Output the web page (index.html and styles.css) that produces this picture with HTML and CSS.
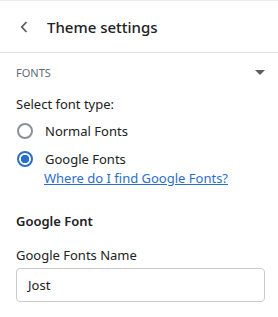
FILE: index.html
```html
<!DOCTYPE html>
<html lang="en">
<head>
    <meta charset="UTF-8">
    <title>Theme settings</title>
    <link rel="stylesheet" href="styles.css">
</head>
<body>
    <div class="header">
        <svg class="back" width="8" height="12" viewBox="0 0 8 12"><path d="M6.5 1 L1.8 6 L6.5 11" fill="none" stroke="#5c5f62" stroke-width="1.8"/></svg>
        <h1>Theme settings</h1>
    </div>
    <div class="section">
        <div class="section-head">
            <span>FONTS</span>
            <span class="caret"></span>
        </div>
        <p class="field-label">Select font type:</p>
        <label class="radio"><span class="dot"></span>Normal Fonts</label>
        <label class="radio"><span class="dot checked"></span>Google Fonts</label>
        <a class="help" href="#">Where do I find Google Fonts?</a>
        <h2>Google Font</h2>
        <p class="field-label name-label">Google Fonts Name</p>
        <div class="input">Jost</div>
    </div>
</body>
</html>
```

FILE: styles.css
```css
body {
    margin: 0;
    font-family: "Noto Sans", "Open Sans", sans-serif;
    color: #202223;
    background: #fff;
    border-top: 1px solid #ececec;
}
.header {
    height: 51px;
    display: flex;
    align-items: center;
    padding-left: 20px;
    border-bottom: 1px solid #e1e3e5;
}
.back {
    margin-right: 19px;
}
.header h1 {
    margin: 0;
    font-size: 15px;
    font-weight: 500;
}
.section {
    padding: 0 13px 0 16px;
}
.section-head {
    margin-top: 9px;
    height: 20px;
    display: flex;
    align-items: center;
    justify-content: space-between;
    font-size: 11px;
    color: #5f6b7a;
}
.caret {
    width: 0;
    height: 0;
    border-left: 5px solid transparent;
    border-right: 5px solid transparent;
    border-top: 5px solid #5c5f62;
}
.field-label {
    margin: 12px 0 0;
    font-size: 13px;
    line-height: 20px;
}
.radio {
    display: flex;
    align-items: center;
    margin-top: 7px;
    font-size: 13px;
    line-height: 20px;
}
.radio + .radio {
    margin-top: 8px;
}
.dot {
    width: 12px;
    height: 12px;
    border: 2px solid #8c9196;
    border-radius: 50%;
    margin: 0 12px 0 1px;
    box-sizing: content-box;
}
.dot.checked {
    border-color: #2c6ecb;
    background: radial-gradient(circle, #2c6ecb 0 4px, #fff 4.5px);
}
.help {
    display: block;
    margin-left: 28px;
    font-size: 13px;
    line-height: 18px;
    color: #2c6ecb;
}
h2 {
    margin: 24px 0 0;
    font-size: 13px;
    font-weight: 600;
    line-height: 20px;
}
.name-label {
    margin-top: 14px;
}
.input {
    margin-top: 3px;
    height: 34px;
    box-sizing: border-box;
    border: 1px solid #c9cccf;
    border-radius: 4px;
    padding: 0 11px;
    font-size: 13px;
    line-height: 32px;
}
```
